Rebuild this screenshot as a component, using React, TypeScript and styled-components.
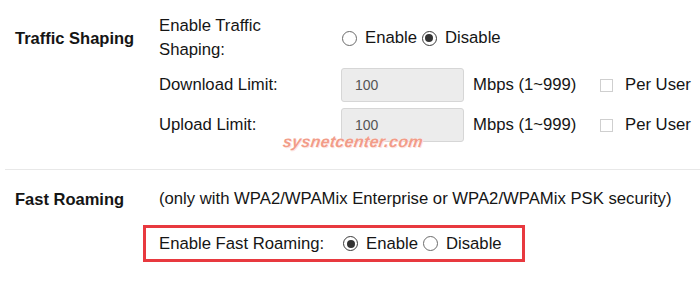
import React from 'react';
import styled, { createGlobalStyle } from 'styled-components';

const GlobalStyle = createGlobalStyle`
  html, body {
    margin: 0;
    padding: 0;
    background: #ffffff;
  }
  body {
    font-family: 'Liberation Sans', Arial, sans-serif;
    font-size: 16.7px;
    color: #151515;
  }
`;

const Page = styled.div`
  position: relative;
  width: 700px;
  height: 282px;
  overflow: hidden;
`;

const SettingsGrid = styled.div`
  display: grid;
  grid-template-columns: 144px 182px auto;
  grid-auto-rows: 34px;
  grid-template-rows: 48px;
  row-gap: 6px;
  align-items: center;
  padding: 14px 0 0 15px;
`;

const SectionTitle = styled.div`
  font-weight: 700;
  font-size: 16.5px;
  line-height: 24px;
  grid-column: 1;
`;

const FieldLabel = styled.div<{ $col?: number }>`
  grid-column: ${(p) => p.$col ?? 2};
  line-height: 24px;
  max-width: 150px;
`;

const Controls = styled.div`
  grid-column: 3;
  display: flex;
  align-items: center;
  height: 100%;
`;

const RadioGroup = styled.div`
  display: flex;
  align-items: center;
  margin-left: 1px;
`;

const RadioOption = styled.label`
  display: flex;
  align-items: center;
  line-height: 24px;
  margin-right: 5px;
`;

const RadioDot = styled.span<{ $checked?: boolean }>`
  width: 15px;
  height: 15px;
  box-sizing: border-box;
  border-radius: 50%;
  border: 1px solid ${(p) => (p.$checked ? '#3a3a3a' : '#6b6b6b')};
  background: #fff;
  display: inline-flex;
  align-items: center;
  justify-content: center;
  margin-right: 8px;
  &::after {
    content: '';
    width: 8px;
    height: 8px;
    border-radius: 50%;
    background: ${(p) => (p.$checked ? '#333' : 'transparent')};
  }
`;

const NumberBox = styled.div`
  width: 123px;
  height: 34px;
  box-sizing: border-box;
  background: #ececec;
  border: 1px solid #d6d6d6;
  border-radius: 3px;
  padding-left: 13px;
  display: flex;
  align-items: center;
  font-size: 14px;
  color: #555;
`;

const Unit = styled.span`
  margin-left: 9px;
  width: 127px;
`;

const CheckBox = styled.span`
  width: 13px;
  height: 13px;
  box-sizing: border-box;
  border: 1px solid #cfcfcf;
  background: #fff;
  margin-right: 12px;
`;

const Divider = styled.div`
  height: 1px;
  background: #e8e8e8;
  margin: 27px 0 0 5px;
`;

const RoamingGrid = styled.div`
  display: grid;
  grid-template-columns: 144px auto;
  align-items: center;
  padding: 17px 0 0 15px;
  line-height: 24px;
`;

const Highlight = styled.div`
  margin: 14px 0 0 143px;
  width: 382px;
  height: 37px;
  box-sizing: border-box;
  border: 3px solid #e8393f;
  display: grid;
  grid-template-columns: 183px auto;
  align-items: center;
  padding-left: 13px;
`;

const Watermark = styled.div`
  position: absolute;
  left: 283px;
  top: 133px;
  font-family: 'Liberation Sans', Arial, sans-serif;
  font-weight: 700;
  font-style: italic;
  font-size: 16px;
  letter-spacing: 0.3px;
  color: #f29c88;
  text-shadow: 0 0 1px #fff, 1px 1px 0 #fde3dc;
  transform: skewX(-8deg);
`;

type RadioProps = { value: 'enable' | 'disable' };

function EnableDisable({ value }: RadioProps) {
  return (
    <RadioGroup>
      <RadioOption>
        <RadioDot $checked={value === 'enable'} />
        Enable
      </RadioOption>
      <RadioOption>
        <RadioDot $checked={value === 'disable'} />
        Disable
      </RadioOption>
    </RadioGroup>
  );
}

function LimitRow({ label }: { label: string }) {
  return (
    <>
      <FieldLabel>{label}</FieldLabel>
      <Controls>
        <NumberBox>100</NumberBox>
        <Unit>Mbps (1~999)</Unit>
        <CheckBox />
        Per User
      </Controls>
    </>
  );
}

export default function App() {
  return (
    <Page>
      <GlobalStyle />
      <SettingsGrid>
        <SectionTitle>Traffic Shaping</SectionTitle>
        <FieldLabel>Enable Traffic Shaping:</FieldLabel>
        <Controls>
          <EnableDisable value="disable" />
        </Controls>
        <LimitRow label="Download Limit:" />
        <LimitRow label="Upload Limit:" />
      </SettingsGrid>
      <Divider />
      <RoamingGrid>
        <SectionTitle>Fast Roaming</SectionTitle>
        <div>(only with WPA2/WPAMix Enterprise or WPA2/WPAMix PSK security)</div>
      </RoamingGrid>
      <Highlight>
        <span>Enable Fast Roaming:</span>
        <EnableDisable value="enable" />
      </Highlight>
      <Watermark>sysnetcenter.com</Watermark>
    </Page>
  );
}
